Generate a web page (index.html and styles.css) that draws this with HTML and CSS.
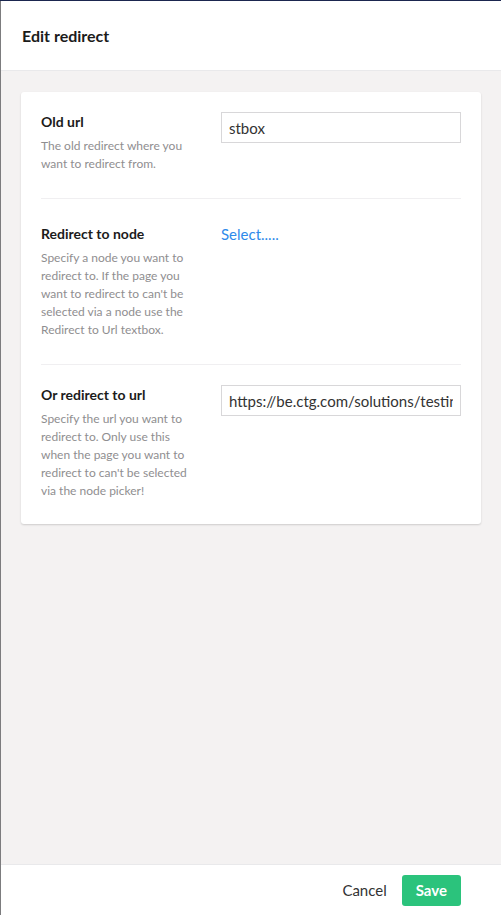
FILE: index.html
```html
<!DOCTYPE html>
<html lang="en">
<head>
  <meta charset="utf-8" />
  <title>Edit redirect</title>
  <meta name="viewport" content="width=device-width, initial-scale=1" />
  <link rel="stylesheet" href="styles.css">
</head>
<body>
  <div class="panel">
    <header class="panel-header">
      <h1>Edit redirect</h1>
    </header>

    <main class="panel-body">
      <section class="card">
        <div class="control-group">
          <div class="control-label">
            <label for="oldUrl">Old url</label>
            <p class="desc">The old redirect where you want to redirect from.</p>
          </div>
          <div class="control-field">
            <input id="oldUrl" class="text-input" type="text" value="stbox">
          </div>
        </div>

        <div class="control-group control-group--picker">
          <div class="control-label">
            <label>Redirect to node</label>
            <p class="desc">Specify a node you want to redirect to. If the page you want to redirect to can't be selected via a node use the Redirect to Url textbox.</p>
          </div>
          <div class="control-field">
            <a href="#" class="picker-link">Select.....</a>
          </div>
        </div>

        <div class="control-group">
          <div class="control-label">
            <label for="newUrl">Or redirect to url</label>
            <p class="desc">Specify the url you want to redirect to. Only use this when the page you want to redirect to can't be selected via the node picker!</p>
          </div>
          <div class="control-field">
            <input id="newUrl" class="text-input" type="text" value="https://be.ctg.com/solutions/testing">
          </div>
        </div>
      </section>
    </main>

    <footer class="panel-footer">
      <button class="btn btn-link" type="button">Cancel</button>
      <button class="btn btn-save" type="button">Save</button>
    </footer>
  </div>
</body>
</html>
```

FILE: styles.css
```css
:root {
  --navy: #1b264f;
  --bg: #f4f2f2;
  --card-bg: #ffffff;
  --text: #1b1b1b;
  --sub: #8f8e90;
  --border: #e9e9eb;
  --input-border: #d8d7d9;
  --blue: #2e8aea;
  --green: #2bc37c;
}

* { box-sizing: border-box; margin: 0; padding: 0; }

html, body { height: 100%; }

body {
  font-family: Lato, "Open Sans", sans-serif;
  color: var(--text);
  background: var(--card-bg);
  border-top: 1px solid var(--navy);
}

.panel {
  height: 100%;
  display: flex;
  flex-direction: column;
  border-left: 1px solid #7c7c7e;
}

.panel-header {
  height: 70px;
  flex: none;
  display: flex;
  align-items: center;
  padding: 0 21px;
  background: var(--card-bg);
  border-bottom: 1px solid var(--border);
}

.panel-header h1 {
  font-size: 16px;
  font-weight: 700;
  color: #1b1b1b;
}

.panel-body {
  flex: 1;
  background: var(--bg);
  padding: 21px 20px;
}

.card {
  background: var(--card-bg);
  border-radius: 3px;
  box-shadow: 0 1px 2px rgba(0,0,0,.16);
  padding: 20px 20px 24px;
}

.control-group {
  display: flex;
  padding-bottom: 25px;
  margin-bottom: 20px;
  border-bottom: 1px solid #f0eff1;
}

/* the picker row sits a little lower than the text rows */
.control-group--picker {
  padding-top: 5px;
}

.control-group:last-child {
  border-bottom: none;
  padding-bottom: 0;
  margin-bottom: 0;
}

.control-label {
  width: 180px;
  flex: none;
  padding-right: 20px;
}

.control-label label {
  display: block;
  font-size: 14px;
  font-weight: 700;
  line-height: 20px;
}

.desc {
  margin-top: 5px;
  font-size: 12px;
  line-height: 18px;
  color: var(--sub);
}

.control-field {
  flex: 1;
  min-width: 0;
}

.text-input {
  display: block;
  width: 100%;
  height: 31px;
  padding: 0 7px;
  border: 1px solid var(--input-border);
  border-radius: 0;
  font-family: inherit;
  font-size: 15px;
  color: #333;
  background: #fff;
  outline: none;
}

.picker-link {
  display: block;
  font-size: 15px;
  line-height: 20px;
  color: var(--blue);
  text-decoration: none;
}

.panel-footer {
  height: 51px;
  flex: none;
  display: flex;
  align-items: center;
  justify-content: flex-end;
  gap: 15px;
  padding: 0 40px 0 20px;
  background: var(--card-bg);
  border-top: 1px solid var(--border);
}

.btn {
  font-family: inherit;
  font-size: 15px;
  border: none;
  background: none;
  cursor: pointer;
}

.btn-link {
  color: #333;
}

.btn-save {
  height: 31px;
  padding: 0 14px;
  border-radius: 3px;
  background: var(--green);
  color: #fff;
  font-weight: 700;
}
```
